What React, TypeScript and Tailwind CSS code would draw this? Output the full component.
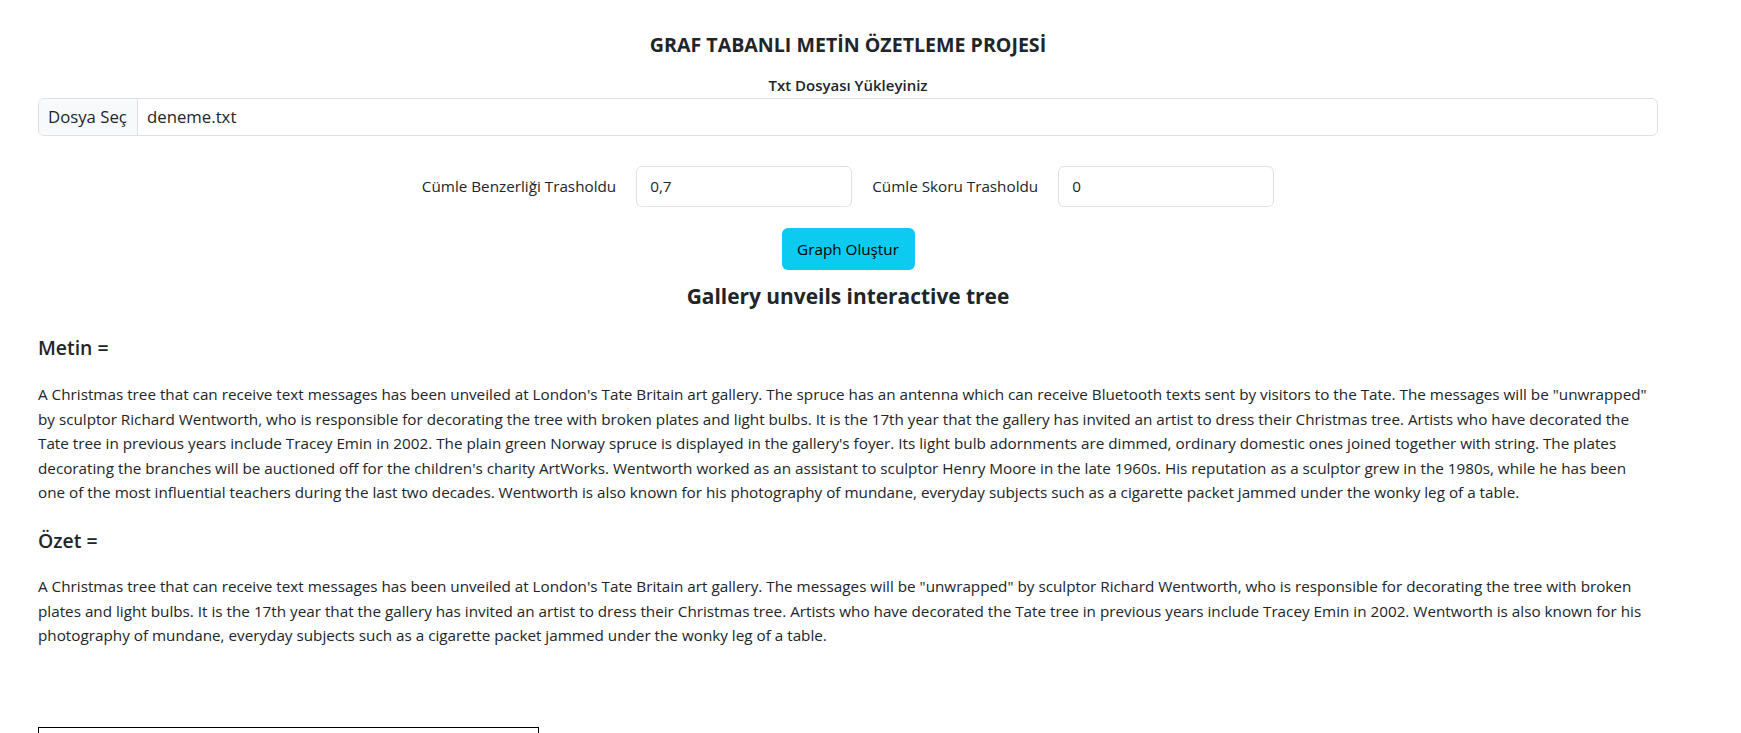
import React from "react";

const metin =
  "A Christmas tree that can receive text messages has been unveiled at London's Tate Britain art gallery. The spruce has an antenna which can receive Bluetooth texts sent by visitors to the Tate. The messages will be \"unwrapped\" by sculptor Richard Wentworth, who is responsible for decorating the tree with broken plates and light bulbs. It is the 17th year that the gallery has invited an artist to dress their Christmas tree. Artists who have decorated the Tate tree in previous years include Tracey Emin in 2002. The plain green Norway spruce is displayed in the gallery's foyer. Its light bulb adornments are dimmed, ordinary domestic ones joined together with string. The plates decorating the branches will be auctioned off for the children's charity ArtWorks. Wentworth worked as an assistant to sculptor Henry Moore in the late 1960s. His reputation as a sculptor grew in the 1980s, while he has been one of the most influential teachers during the last two decades. Wentworth is also known for his photography of mundane, everyday subjects such as a cigarette packet jammed under the wonky leg of a table.";

const ozet =
  "A Christmas tree that can receive text messages has been unveiled at London's Tate Britain art gallery. The messages will be \"unwrapped\" by sculptor Richard Wentworth, who is responsible for decorating the tree with broken plates and light bulbs. It is the 17th year that the gallery has invited an artist to dress their Christmas tree. Artists who have decorated the Tate tree in previous years include Tracey Emin in 2002. Wentworth is also known for his photography of mundane, everyday subjects such as a cigarette packet jammed under the wonky leg of a table.";

export default function App() {
  return (
    <div className="min-h-[733px] bg-white text-[#212529] font-['Open_Sans',sans-serif] text-[15.25px] overflow-hidden">
      <div className="ml-[38px] w-[1620px] flex flex-col items-center pt-[33px]">
        <h5 className="text-[19.6px] leading-[24px] font-bold">GRAF TABANLI METİN ÖZETLEME PROJESİ</h5>
        <label className="mt-[16px] text-[15px] leading-[24px] font-semibold">Txt Dosyası Yükleyiniz</label>
        <div className="mt-[1px] w-full h-[38px] flex border border-[#dee2e6] rounded-[6px] overflow-hidden text-[16.75px]">
          <div className="w-[99px] shrink-0 bg-[#f8f9fa] border-r border-[#dee2e6] flex items-center px-[9px]">Dosya Seç</div>
          <div className="flex items-center px-[9px]">deneme.txt</div>
        </div>
        <div className="mt-[30px] flex items-center gap-[20px]">
          <span>Cümle Benzerliği Trasholdu</span>
          <div className="w-[216px] h-[41px] border border-[#dee2e6] rounded-[6px] flex items-center px-[13px]">0,7</div>
          <span>Cümle Skoru Trasholdu</span>
          <div className="w-[216px] h-[41px] border border-[#dee2e6] rounded-[6px] flex items-center px-[13px]">0</div>
        </div>
        <button className="mt-[21px] h-[42px] w-[133px] bg-[#0dcaf0] rounded-[6px] text-black flex items-center justify-center">Graph Oluştur</button>
        <h5 className="mt-[14px] text-[20.9px] leading-[24px] font-bold">Gallery unveils interactive tree</h5>
      </div>
      <div className="ml-[38px] w-[1627px]">
        <h5 className="mt-[28px] text-[19.4px] leading-[24px] font-semibold">Metin =</h5>
        <p className="mt-[22px] w-[1616px] leading-[24.6px]">{metin}</p>
        <h5 className="mt-[24px] text-[19.4px] leading-[24px] font-semibold">Özet =</h5>
        <p className="mt-[21px] w-[1627px] leading-[24.6px]">{ozet}</p>
        <div className="mt-[79px] w-[501px] h-[300px] border border-black"></div>
      </div>
    </div>
  );
}
